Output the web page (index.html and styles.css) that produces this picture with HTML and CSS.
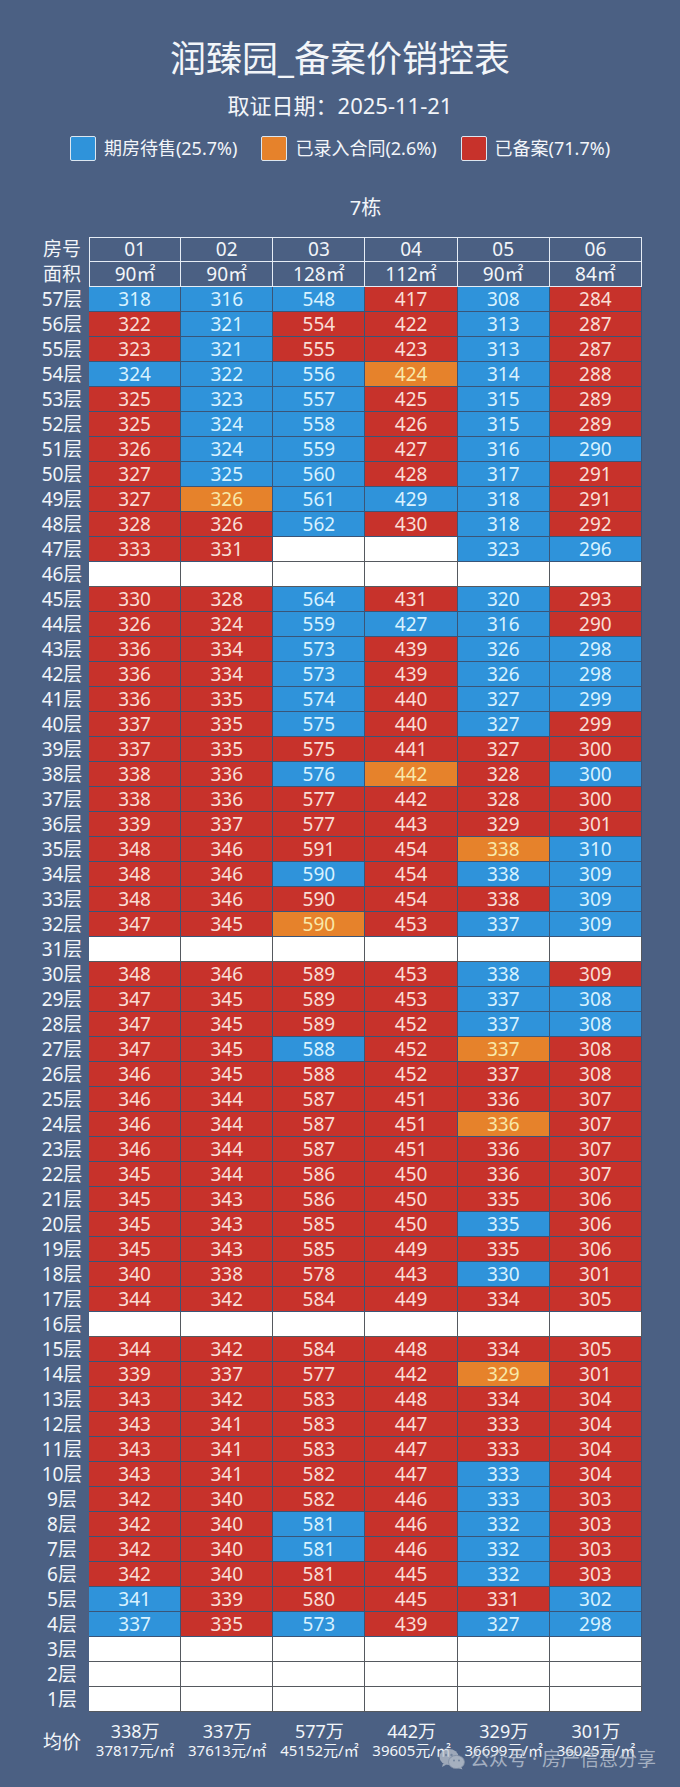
FILE: index.html
```html
<!DOCTYPE html>
<html lang="zh-CN">
<head>
<meta charset="utf-8">
<title>润臻园_备案价销控表</title>
<link rel="stylesheet" href="styles.css">
</head>
<body>
<div class="page">
  <h1 class="title">润臻园_备案价销控表</h1>
  <div class="date">取证日期：2025-11-21</div>
  <div class="legend">
    <div class="legend-item"><span class="swatch sw-b"></span>期房待售(25.7%)</div>
    <div class="legend-item"><span class="swatch sw-o"></span>已录入合同(2.6%)</div>
    <div class="legend-item"><span class="swatch sw-r"></span>已备案(71.7%)</div>
  </div>
  <div class="building">7栋</div>
  <div class="table">
    <div class="row head first"><span class="fl">房号</span><span class="h">01</span><span class="h">02</span><span class="h">03</span><span class="h">04</span><span class="h">05</span><span class="h">06</span></div>
    <div class="row head"><span class="fl">面积</span><span class="h">90㎡</span><span class="h">90㎡</span><span class="h">128㎡</span><span class="h">112㎡</span><span class="h">90㎡</span><span class="h">84㎡</span></div>
    <div class="row"><span class="fl">57层</span><span class="c b">318</span><span class="c b">316</span><span class="c b">548</span><span class="c r">417</span><span class="c b">308</span><span class="c r">284</span></div>
    <div class="row"><span class="fl">56层</span><span class="c r">322</span><span class="c b">321</span><span class="c r">554</span><span class="c r">422</span><span class="c b">313</span><span class="c r">287</span></div>
    <div class="row"><span class="fl">55层</span><span class="c r">323</span><span class="c b">321</span><span class="c r">555</span><span class="c r">423</span><span class="c b">313</span><span class="c r">287</span></div>
    <div class="row"><span class="fl">54层</span><span class="c b">324</span><span class="c b">322</span><span class="c b">556</span><span class="c o">424</span><span class="c b">314</span><span class="c r">288</span></div>
    <div class="row"><span class="fl">53层</span><span class="c r">325</span><span class="c b">323</span><span class="c b">557</span><span class="c r">425</span><span class="c b">315</span><span class="c r">289</span></div>
    <div class="row"><span class="fl">52层</span><span class="c r">325</span><span class="c b">324</span><span class="c b">558</span><span class="c r">426</span><span class="c b">315</span><span class="c r">289</span></div>
    <div class="row"><span class="fl">51层</span><span class="c r">326</span><span class="c b">324</span><span class="c b">559</span><span class="c r">427</span><span class="c b">316</span><span class="c b">290</span></div>
    <div class="row"><span class="fl">50层</span><span class="c r">327</span><span class="c b">325</span><span class="c b">560</span><span class="c r">428</span><span class="c b">317</span><span class="c r">291</span></div>
    <div class="row"><span class="fl">49层</span><span class="c r">327</span><span class="c o">326</span><span class="c b">561</span><span class="c b">429</span><span class="c b">318</span><span class="c r">291</span></div>
    <div class="row"><span class="fl">48层</span><span class="c r">328</span><span class="c r">326</span><span class="c b">562</span><span class="c r">430</span><span class="c b">318</span><span class="c r">292</span></div>
    <div class="row"><span class="fl">47层</span><span class="c r">333</span><span class="c r">331</span><span class="c w"></span><span class="c w"></span><span class="c b">323</span><span class="c b">296</span></div>
    <div class="row"><span class="fl">46层</span><span class="c w"></span><span class="c w"></span><span class="c w"></span><span class="c w"></span><span class="c w"></span><span class="c w"></span></div>
    <div class="row"><span class="fl">45层</span><span class="c r">330</span><span class="c r">328</span><span class="c b">564</span><span class="c r">431</span><span class="c b">320</span><span class="c r">293</span></div>
    <div class="row"><span class="fl">44层</span><span class="c r">326</span><span class="c r">324</span><span class="c b">559</span><span class="c b">427</span><span class="c b">316</span><span class="c r">290</span></div>
    <div class="row"><span class="fl">43层</span><span class="c r">336</span><span class="c r">334</span><span class="c b">573</span><span class="c r">439</span><span class="c b">326</span><span class="c b">298</span></div>
    <div class="row"><span class="fl">42层</span><span class="c r">336</span><span class="c r">334</span><span class="c b">573</span><span class="c r">439</span><span class="c b">326</span><span class="c b">298</span></div>
    <div class="row"><span class="fl">41层</span><span class="c r">336</span><span class="c r">335</span><span class="c b">574</span><span class="c r">440</span><span class="c b">327</span><span class="c b">299</span></div>
    <div class="row"><span class="fl">40层</span><span class="c r">337</span><span class="c r">335</span><span class="c b">575</span><span class="c r">440</span><span class="c b">327</span><span class="c r">299</span></div>
    <div class="row"><span class="fl">39层</span><span class="c r">337</span><span class="c r">335</span><span class="c r">575</span><span class="c r">441</span><span class="c r">327</span><span class="c r">300</span></div>
    <div class="row"><span class="fl">38层</span><span class="c r">338</span><span class="c r">336</span><span class="c b">576</span><span class="c o">442</span><span class="c r">328</span><span class="c b">300</span></div>
    <div class="row"><span class="fl">37层</span><span class="c r">338</span><span class="c r">336</span><span class="c r">577</span><span class="c r">442</span><span class="c r">328</span><span class="c r">300</span></div>
    <div class="row"><span class="fl">36层</span><span class="c r">339</span><span class="c r">337</span><span class="c r">577</span><span class="c r">443</span><span class="c r">329</span><span class="c r">301</span></div>
    <div class="row"><span class="fl">35层</span><span class="c r">348</span><span class="c r">346</span><span class="c r">591</span><span class="c r">454</span><span class="c o">338</span><span class="c b">310</span></div>
    <div class="row"><span class="fl">34层</span><span class="c r">348</span><span class="c r">346</span><span class="c b">590</span><span class="c r">454</span><span class="c b">338</span><span class="c b">309</span></div>
    <div class="row"><span class="fl">33层</span><span class="c r">348</span><span class="c r">346</span><span class="c r">590</span><span class="c r">454</span><span class="c r">338</span><span class="c b">309</span></div>
    <div class="row"><span class="fl">32层</span><span class="c r">347</span><span class="c r">345</span><span class="c o">590</span><span class="c r">453</span><span class="c b">337</span><span class="c b">309</span></div>
    <div class="row"><span class="fl">31层</span><span class="c w"></span><span class="c w"></span><span class="c w"></span><span class="c w"></span><span class="c w"></span><span class="c w"></span></div>
    <div class="row"><span class="fl">30层</span><span class="c r">348</span><span class="c r">346</span><span class="c r">589</span><span class="c r">453</span><span class="c b">338</span><span class="c r">309</span></div>
    <div class="row"><span class="fl">29层</span><span class="c r">347</span><span class="c r">345</span><span class="c r">589</span><span class="c r">453</span><span class="c b">337</span><span class="c b">308</span></div>
    <div class="row"><span class="fl">28层</span><span class="c r">347</span><span class="c r">345</span><span class="c r">589</span><span class="c r">452</span><span class="c b">337</span><span class="c b">308</span></div>
    <div class="row"><span class="fl">27层</span><span class="c r">347</span><span class="c r">345</span><span class="c b">588</span><span class="c r">452</span><span class="c o">337</span><span class="c r">308</span></div>
    <div class="row"><span class="fl">26层</span><span class="c r">346</span><span class="c r">345</span><span class="c r">588</span><span class="c r">452</span><span class="c r">337</span><span class="c r">308</span></div>
    <div class="row"><span class="fl">25层</span><span class="c r">346</span><span class="c r">344</span><span class="c r">587</span><span class="c r">451</span><span class="c r">336</span><span class="c r">307</span></div>
    <div class="row"><span class="fl">24层</span><span class="c r">346</span><span class="c r">344</span><span class="c r">587</span><span class="c r">451</span><span class="c o">336</span><span class="c r">307</span></div>
    <div class="row"><span class="fl">23层</span><span class="c r">346</span><span class="c r">344</span><span class="c r">587</span><span class="c r">451</span><span class="c r">336</span><span class="c r">307</span></div>
    <div class="row"><span class="fl">22层</span><span class="c r">345</span><span class="c r">344</span><span class="c r">586</span><span class="c r">450</span><span class="c r">336</span><span class="c r">307</span></div>
    <div class="row"><span class="fl">21层</span><span class="c r">345</span><span class="c r">343</span><span class="c r">586</span><span class="c r">450</span><span class="c r">335</span><span class="c r">306</span></div>
    <div class="row"><span class="fl">20层</span><span class="c r">345</span><span class="c r">343</span><span class="c r">585</span><span class="c r">450</span><span class="c b">335</span><span class="c r">306</span></div>
    <div class="row"><span class="fl">19层</span><span class="c r">345</span><span class="c r">343</span><span class="c r">585</span><span class="c r">449</span><span class="c r">335</span><span class="c r">306</span></div>
    <div class="row"><span class="fl">18层</span><span class="c r">340</span><span class="c r">338</span><span class="c r">578</span><span class="c r">443</span><span class="c b">330</span><span class="c r">301</span></div>
    <div class="row"><span class="fl">17层</span><span class="c r">344</span><span class="c r">342</span><span class="c r">584</span><span class="c r">449</span><span class="c r">334</span><span class="c r">305</span></div>
    <div class="row"><span class="fl">16层</span><span class="c w"></span><span class="c w"></span><span class="c w"></span><span class="c w"></span><span class="c w"></span><span class="c w"></span></div>
    <div class="row"><span class="fl">15层</span><span class="c r">344</span><span class="c r">342</span><span class="c r">584</span><span class="c r">448</span><span class="c r">334</span><span class="c r">305</span></div>
    <div class="row"><span class="fl">14层</span><span class="c r">339</span><span class="c r">337</span><span class="c r">577</span><span class="c r">442</span><span class="c o">329</span><span class="c r">301</span></div>
    <div class="row"><span class="fl">13层</span><span class="c r">343</span><span class="c r">342</span><span class="c r">583</span><span class="c r">448</span><span class="c r">334</span><span class="c r">304</span></div>
    <div class="row"><span class="fl">12层</span><span class="c r">343</span><span class="c r">341</span><span class="c r">583</span><span class="c r">447</span><span class="c r">333</span><span class="c r">304</span></div>
    <div class="row"><span class="fl">11层</span><span class="c r">343</span><span class="c r">341</span><span class="c r">583</span><span class="c r">447</span><span class="c r">333</span><span class="c r">304</span></div>
    <div class="row"><span class="fl">10层</span><span class="c r">343</span><span class="c r">341</span><span class="c r">582</span><span class="c r">447</span><span class="c b">333</span><span class="c r">304</span></div>
    <div class="row"><span class="fl">9层</span><span class="c r">342</span><span class="c r">340</span><span class="c r">582</span><span class="c r">446</span><span class="c b">333</span><span class="c r">303</span></div>
    <div class="row"><span class="fl">8层</span><span class="c r">342</span><span class="c r">340</span><span class="c b">581</span><span class="c r">446</span><span class="c b">332</span><span class="c r">303</span></div>
    <div class="row"><span class="fl">7层</span><span class="c r">342</span><span class="c r">340</span><span class="c b">581</span><span class="c r">446</span><span class="c b">332</span><span class="c r">303</span></div>
    <div class="row"><span class="fl">6层</span><span class="c r">342</span><span class="c r">340</span><span class="c r">581</span><span class="c r">445</span><span class="c b">332</span><span class="c r">303</span></div>
    <div class="row"><span class="fl">5层</span><span class="c b">341</span><span class="c r">339</span><span class="c r">580</span><span class="c r">445</span><span class="c r">331</span><span class="c b">302</span></div>
    <div class="row"><span class="fl">4层</span><span class="c b">337</span><span class="c r">335</span><span class="c b">573</span><span class="c r">439</span><span class="c b">327</span><span class="c b">298</span></div>
    <div class="row"><span class="fl">3层</span><span class="c w"></span><span class="c w"></span><span class="c w"></span><span class="c w"></span><span class="c w"></span><span class="c w"></span></div>
    <div class="row"><span class="fl">2层</span><span class="c w"></span><span class="c w"></span><span class="c w"></span><span class="c w"></span><span class="c w"></span><span class="c w"></span></div>
    <div class="row"><span class="fl">1层</span><span class="c w"></span><span class="c w"></span><span class="c w"></span><span class="c w"></span><span class="c w"></span><span class="c w"></span></div>
    <div class="avg">
      <span class="avg-label">均价</span>
      <div class="avg-cell"><div class="avg-total">338万</div><div class="avg-unit">37817元/㎡</div></div>
      <div class="avg-cell"><div class="avg-total">337万</div><div class="avg-unit">37613元/㎡</div></div>
      <div class="avg-cell"><div class="avg-total">577万</div><div class="avg-unit">45152元/㎡</div></div>
      <div class="avg-cell"><div class="avg-total">442万</div><div class="avg-unit">39605元/㎡</div></div>
      <div class="avg-cell"><div class="avg-total">329万</div><div class="avg-unit">36699元/㎡</div></div>
      <div class="avg-cell"><div class="avg-total">301万</div><div class="avg-unit">36025元/㎡</div></div>
    </div>
  </div>
  <div class="watermark">
    <svg class="wm-icon" viewBox="0 0 26 22" width="26" height="22" aria-hidden="true">
      <ellipse cx="10" cy="9" rx="9.5" ry="8" fill="#b9c1cc"/>
      <path d="M4 15.5 L3 19 L7.5 16.5 Z" fill="#b9c1cc"/>
      <ellipse cx="17.5" cy="14" rx="8" ry="6.6" fill="#c4cbd4" stroke="#8e9aac" stroke-width="0.8"/>
      <path d="M22 19 L23.5 21.5 L19.5 20 Z" fill="#c4cbd4"/>
      <circle cx="7" cy="7" r="1.2" fill="#8090a6"/>
      <circle cx="12.5" cy="7" r="1.2" fill="#8090a6"/>
      <circle cx="15" cy="12.5" r="1" fill="#8090a6"/>
      <circle cx="20" cy="12.5" r="1" fill="#8090a6"/>
    </svg>
    <span class="wm-text">公众号 · 房产信息分享</span>
  </div>
</div>
</body>
</html>
```

FILE: styles.css
```css
html, body {
  margin: 0;
  padding: 0;
}

body {
  background: #4b6083;
  font-family: "Noto Sans", "Noto Sans CJK SC", sans-serif;
  color: #f2f5f9;
}

.page {
  position: relative;
  width: 680px;
  height: 1787px;
  overflow: hidden;
}

.title {
  margin: 0;
  padding-top: 37px;
  font-size: 36px;
  line-height: 44px;
  font-weight: 400;
  text-align: center;
}

.date {
  margin-top: 11px;
  font-size: 22px;
  line-height: 27px;
  text-align: center;
}

.legend {
  display: flex;
  justify-content: center;
  align-items: center;
  gap: 24px;
  height: 25px;
  margin-top: 17px;
}

.legend-item {
  display: flex;
  align-items: center;
  gap: 8px;
  font-size: 18px;
  line-height: 25px;
}

.swatch {
  display: block;
  width: 26px;
  height: 25px;
  box-sizing: border-box;
  border: 1px solid #dbe6f0;
  border-radius: 2px;
}

.sw-b { background: #2f93da; }
.sw-o { background: #e6822b; }
.sw-r { background: #c7322b; }

.building {
  width: 553px;
  margin: 35px 0 0 89px;
  font-size: 20px;
  line-height: 24px;
  text-align: center;
}

.table {
  width: 607px;
  margin: 17px 0 0 35px;
}

.row {
  display: grid;
  grid-template-columns: 54px repeat(6, 1fr);
  height: 25px;
}

.fl {
  font-size: 19px;
  line-height: 25px;
  text-align: center;
  white-space: nowrap;
}

.h {
  box-sizing: border-box;
  border-right: 1px solid #e6edf5;
  border-bottom: 1px solid #e6edf5;
  font-size: 19px;
  line-height: 24px;
  text-align: center;
  white-space: nowrap;
}

.head .h:nth-child(2) {
  border-left: 1px solid #e6edf5;
}

.first .h {
  border-top: 1px solid #e6edf5;
  line-height: 23px;
}

.c {
  box-sizing: border-box;
  border-right: 1px solid #3a5578;
  border-bottom: 1px solid #3a5578;
  font-size: 19px;
  line-height: 24px;
  text-align: center;
}

.c.b { background: #2f93da; color: #d8f2ff; }
.c.r { background: #c7322b; color: #f9ded6; }
.c.o { background: #e6822b; color: #f8e9a9; }
.c.w { background: #ffffff; border-color: #55595f; }

.avg {
  display: grid;
  grid-template-columns: 54px repeat(6, 1fr);
  height: 75px;
}

.avg-label {
  padding-top: 18px;
  font-size: 19px;
  line-height: 25px;
  text-align: center;
}

.avg-cell {
  padding-top: 10px;
  text-align: center;
  white-space: nowrap;
}

.avg-total {
  font-size: 18px;
  line-height: 19px;
}

.avg-unit {
  font-size: 15px;
  line-height: 18px;
}

.watermark {
  position: absolute;
  left: 439px;
  top: 1748px;
  display: flex;
  align-items: center;
  gap: 5px;
  opacity: 0.75;
}

.wm-icon {
  display: block;
}

.wm-text {
  font-size: 19px;
  line-height: 22px;
  color: #c3cbd7;
  white-space: nowrap;
}
```
